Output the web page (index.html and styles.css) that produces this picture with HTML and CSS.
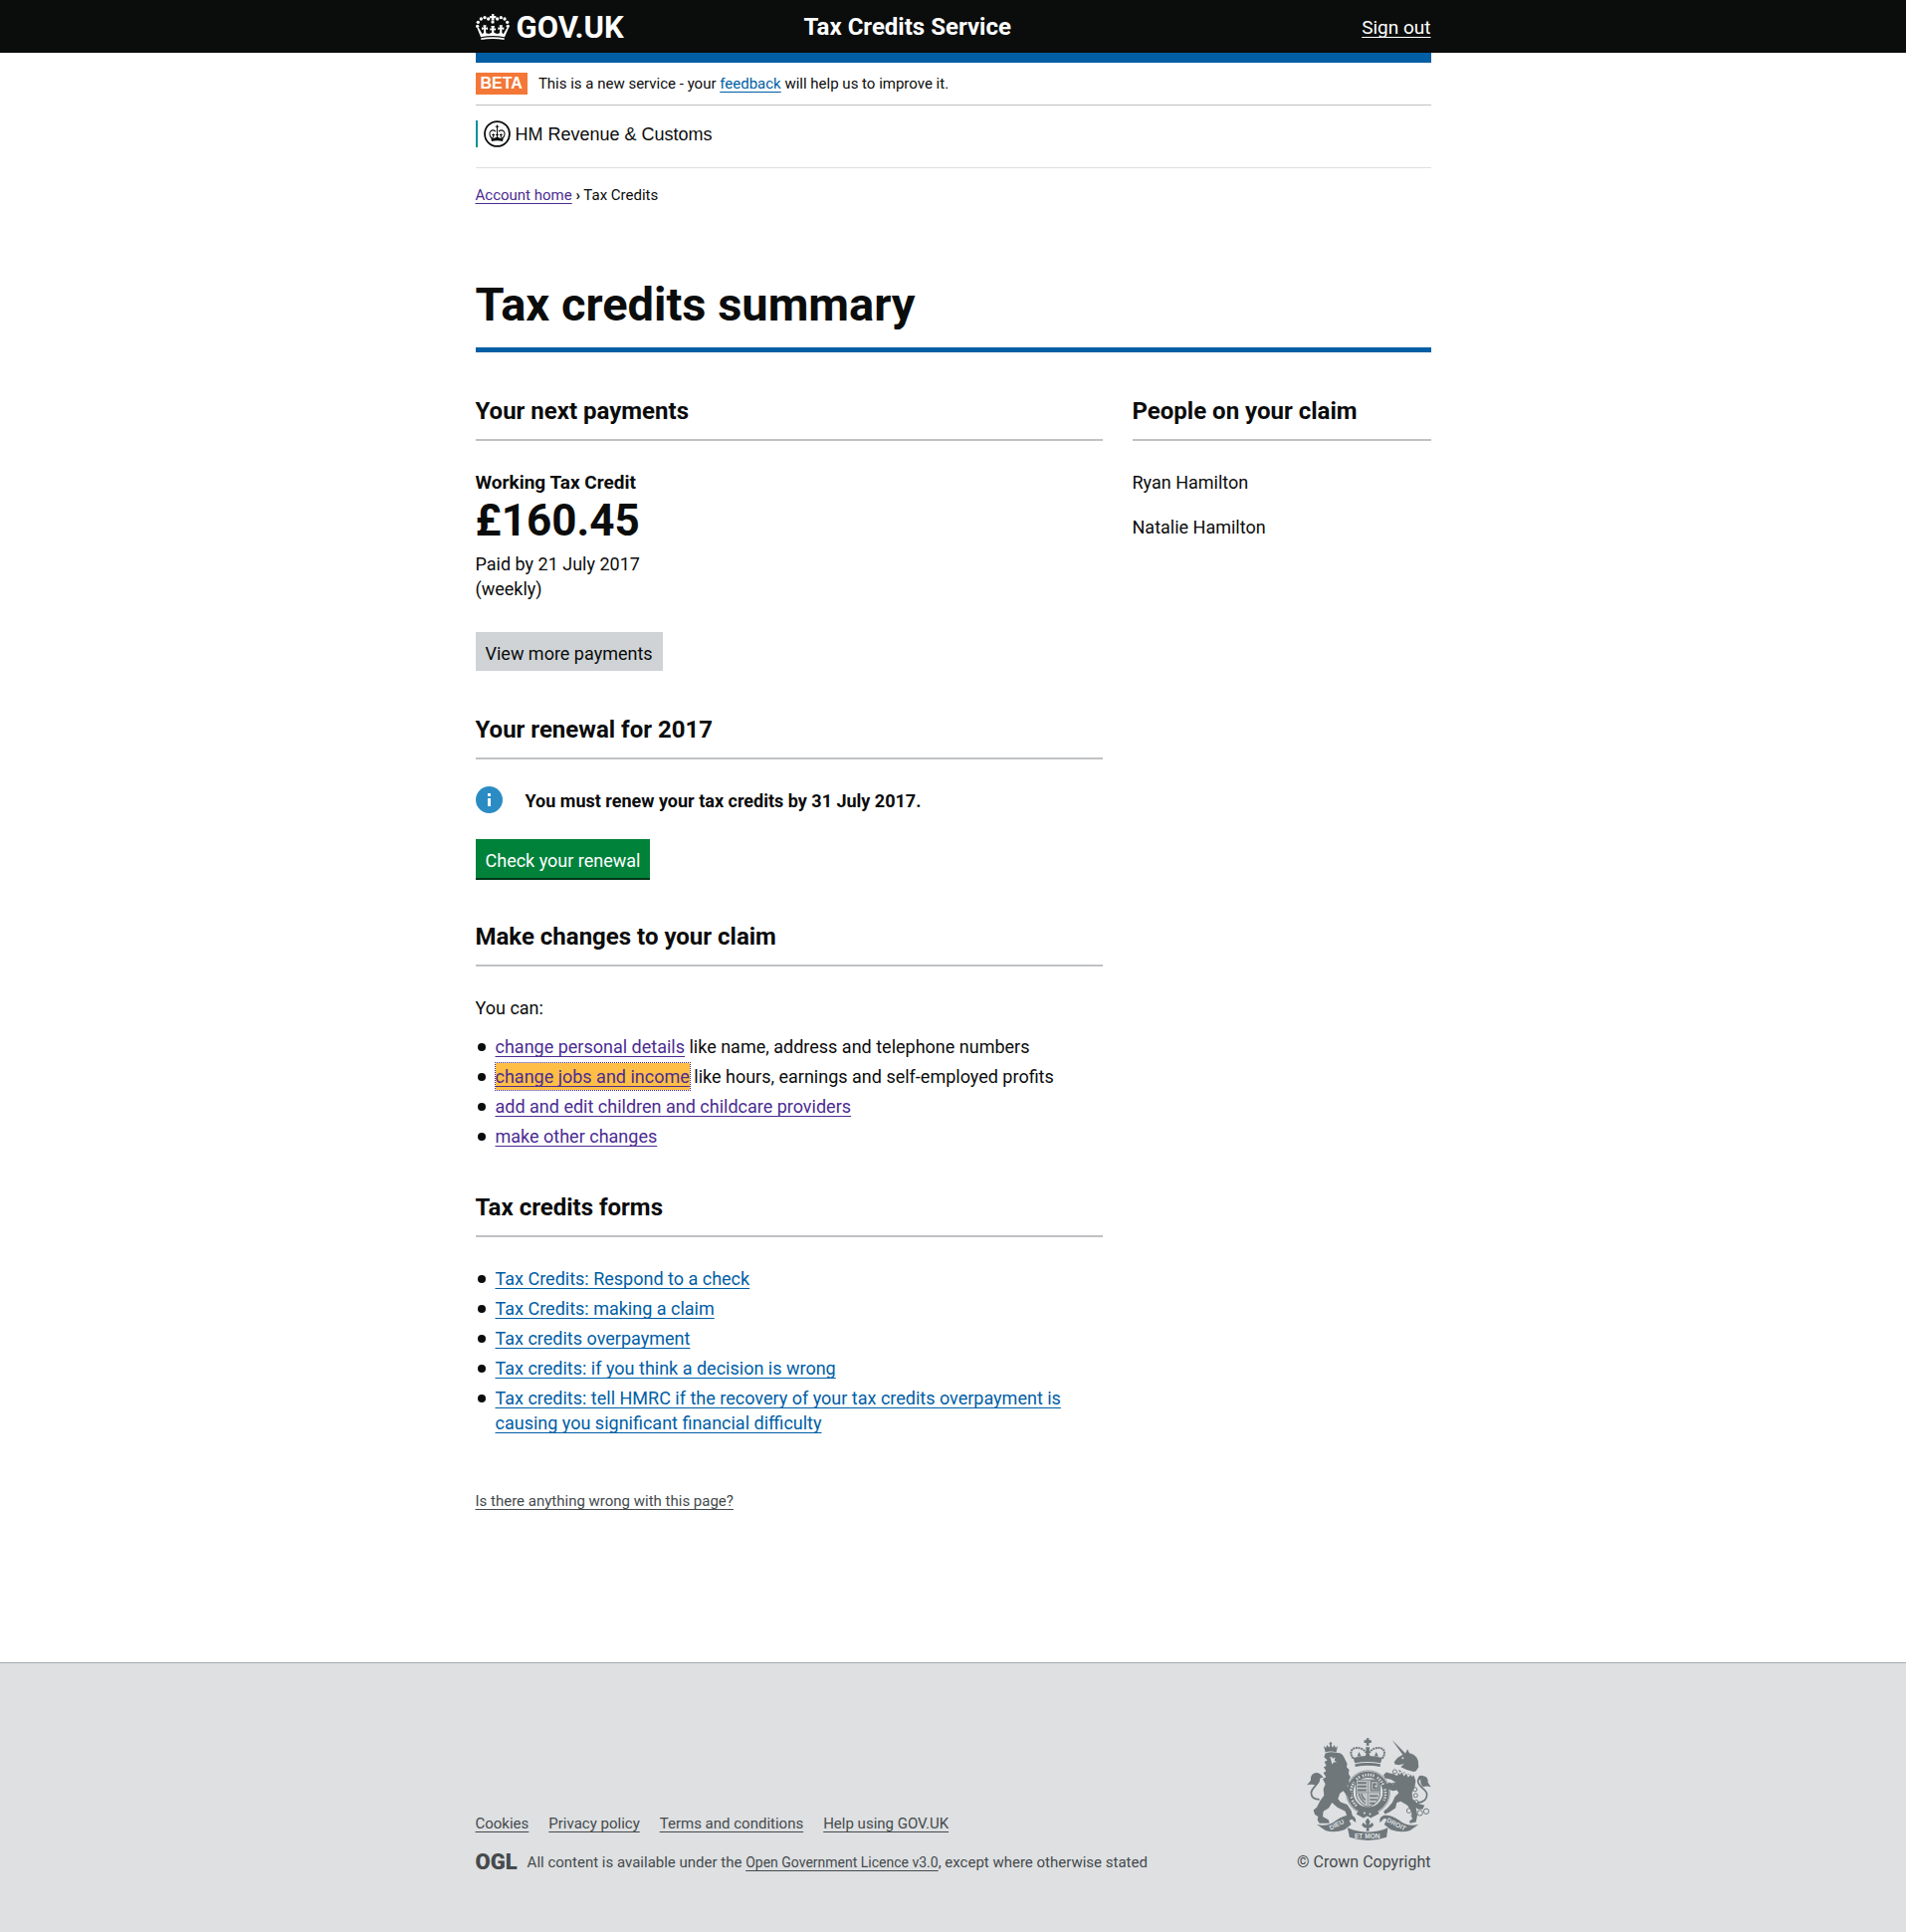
FILE: index.html
```html
<!DOCTYPE html>
<html lang="en">
<head>
<meta charset="utf-8">
<meta name="viewport" content="width=device-width, initial-scale=1">
<title>Tax credits summary - GOV.UK</title>
<link rel="stylesheet" href="styles.css">
</head>
<body>
<header class="site-header">
  <div class="container header-inner">
    <a class="logo" href="#">
      <svg class="logo-crown" viewBox="0 0 102 78" aria-hidden="true" fill="currentColor">
        <path d="M48 0h7v6h6v7h-6l1 6h-9l1-6h-6V6h6z"/>
        <circle cx="51" cy="24" r="5"/>
        <circle cx="38" cy="15" r="5"/><circle cx="27" cy="11" r="5"/><circle cx="16" cy="15" r="5"/><circle cx="7" cy="25" r="5"/><circle cx="5" cy="37" r="5"/>
        <circle cx="65" cy="15" r="5"/><circle cx="76" cy="11" r="5"/><circle cx="87" cy="15" r="5"/><circle cx="95" cy="25" r="5"/><circle cx="97" cy="37" r="5"/>
        <path d="M4 42L9 42 20 61 24 56 24 46 18 48 18 40 24 42 22 34 32 34 30 42 36 40 36 48 30 46 31 58 39 60 48 56 48 48 43 50 43 43 48 44 46 36 57 36 55 44 60 43 60 50 55 48 55 56 64 60 72 58 73 46 67 48 67 40 73 42 71 34 81 34 79 42 85 40 85 48 79 46 79 56 83 61 94 42 99 42 87 70Q51 62 15 70Z"/>
        <path d="M16 73q35-7 70 0v5q-35-6-70 0z"/>
      </svg>
      <span>GOV.UK</span>
    </a>
    <a class="service-name" href="#">Tax Credits Service</a>
    <a class="sign-out" href="#">Sign out</a>
  </div>
</header>
<div class="container">
  <div class="header-bar"></div>
  <div class="phase-banner">
    <strong class="phase-tag">BETA</strong>
    <span>This is a new service - your <a href="#">feedback</a> will help us to improve it.</span>
  </div>
  <div class="organisation">
    <div class="organisation-logo">
      <svg class="organisation-crest" viewBox="0 0 78 78" aria-hidden="true">
        <circle cx="39" cy="39" r="36" fill="none" stroke="currentColor" stroke-width="5"/>
        <g fill="none" stroke="currentColor" stroke-width="3">
          <path d="M21 50C11 32 24 24 35 32M57 50c10-18-3-26-14-18M39 26v26M28 50V38M50 50V38M24 42h8M46 42h8M35 42h8"/>
          <path d="M34 18h10M39 13v14"/>
        </g>
        <path fill="currentColor" d="M20 46l9 6 10-4 10 4 9-6-3 15q-16-5-32 0z"/>
      </svg>
      <span>HM Revenue &amp; Customs</span>
    </div>
  </div>
  <nav class="breadcrumb" aria-label="Breadcrumb"><a class="visited" href="#">Account home</a> <b>›</b> Tax Credits</nav>
  <main>
    <h1>Tax credits summary</h1>
    <div class="columns">
      <div class="column-main">
        <section>
          <h2>Your next payments</h2>
          <h3>Working Tax Credit</h3>
          <p class="amount">£160.45</p>
          <p>Paid by 21 July 2017<br>(weekly)</p>
          <button class="button button-secondary" type="button">View more payments</button>
        </section>
        <section>
          <h2>Your renewal for 2017</h2>
          <div class="notice">
            <svg class="notice-icon" viewBox="0 0 27 27" aria-hidden="true"><circle cx="13.500" cy="13.500" r="13.500" fill="#2b8cc4"/><path fill="#fff" d="M12 7h3v3h-3zM12 12h3v8h-3z"/></svg>
            <strong>You must renew your tax credits by 31 July 2017.</strong>
          </div>
          <button class="button button-primary" type="button">Check your renewal</button>
        </section>
        <section>
          <h2>Make changes to your claim</h2>
          <p>You can:</p>
          <ul class="link-list">
            <li><a class="visited" href="#">change personal details</a> like name, address and telephone numbers</li>
            <li><a class="visited focused" href="#">change jobs and income</a> like hours, earnings and self-employed profits</li>
            <li><a class="visited" href="#">add and edit children and childcare providers</a></li>
            <li><a class="visited" href="#">make other changes</a></li>
          </ul>
        </section>
        <section>
          <h2>Tax credits forms</h2>
          <ul class="link-list">
            <li><a href="#">Tax Credits: Respond to a check</a></li>
            <li><a href="#">Tax Credits: making a claim</a></li>
            <li><a href="#">Tax credits overpayment</a></li>
            <li><a href="#">Tax credits: if you think a decision is wrong</a></li>
            <li><a href="#">Tax credits: tell HMRC if the recovery of your tax credits overpayment is causing you significant financial difficulty</a></li>
          </ul>
        </section>
      </div>
      <aside class="column-side">
        <h2>People on your claim</h2>
        <p>Ryan Hamilton</p>
        <p>Natalie Hamilton</p>
      </aside>
    </div>
    <p class="report"><a href="#">Is there anything wrong with this page?</a></p>
  </main>
</div>
<footer class="site-footer">
  <div class="container footer-inner">
    <div class="footer-meta">
      <nav class="footer-links" aria-label="Footer">
        <a href="#">Cookies</a>
        <a href="#">Privacy policy</a>
        <a href="#">Terms and conditions</a>
        <a href="#">Help using GOV.UK</a>
      </nav>
      <div class="licence">
        <span class="ogl">OGL</span>
        <span>All content is available under the <a href="#">Open Government Licence v3.0</a>, except where otherwise stated</span>
      </div>
    </div>
    <div class="copyright">
      <svg class="arms" viewBox="68 46 376 310" role="img" aria-label="Royal coat of arms" fill="#6f777b">
        <!-- crown -->
        <path d="M248 47h8v6h7v8h-7v8h-8v-8h-7v-8h7z"/>
        <path d="M213 122l-5-16q44-12 88 0l-5 16q-39-8-78 0zM214 125q38-8 76 0v8q-38-7-76 0z"/>
        <g fill="none" stroke="#6f777b" stroke-width="6" stroke-dasharray="6 2"><path d="M208 108C190 84 212 68 236 80q14 8 16 24M296 108c18-24-4-40-28-28q-14 8-16 24"/></g>
        <path d="M246 74h12l-3 26h-6zM226 88l6 14h-12zM278 88l6 14h-12zM252 86l9 18h-18z"/>
        <!-- garter and shield -->
        <circle cx="253" cy="211" r="54" fill="none" stroke="#6f777b" stroke-width="19"/>
        <circle cx="253" cy="211" r="66" fill="none" stroke="#6f777b" stroke-width="2"/>
        <path d="M217 173h72v46q-4 26-36 36-32-10-36-36z" fill="#c3c7c9" stroke="#6f777b" stroke-width="3"/>
        <path d="M221 179h27v6h-27zM221 190h27v6h-27zM221 201h27v6h-27zM258 219h25v5h-25zM258 230h23v5h-23zM258 241h15v5h-15z"/>
        <path d="M262 177h22v28h-22zM225 214q6 20 20 30M233 214q2 14 12 20" fill="none" stroke="#6f777b" stroke-width="4"/>
        <path d="M267 183h12v6h-6v6h8v6h-14z"/>
        <path d="M251 171h4v82h-4zM216 209h74v4h-74z" fill="#9aa0a3"/>
        <g fill="none" stroke="#dee0e2" stroke-width="8"><path d="M204 228a52 52 0 0 1 7-48M218 171a52 52 0 0 1 12-8M236 161a52 52 0 0 1 37 0M281 166a52 52 0 0 1 19 23M304 201a52 52 0 0 1-3 34M206 235a52 52 0 0 0 14 18" stroke-dasharray="4 4"/></g>
        <path d="M229 262l48-1 10 14-26 13-10-6-12 6-22-12z"/>
        <circle cx="242" cy="273" r="3" fill="#dee0e2"/><circle cx="259" cy="276" r="3" fill="#dee0e2"/>
        <!-- lion -->
        <path d="M124 90L119 70 126 76 129 67 135 75 140 64 146 75 151 67 155 76 161 70 157 90Q140 84 124 90Z"/>
        <circle cx="140" cy="63" r="4"/>
        <path d="M124 93Q140 86 158 91Q174 90 180 104L190 124 188 134 196 142 194 154 200 164 194 176 199 188 188 190 196 204 206 212 200 226 190 222 178 206 168 214 162 230 170 240 190 248 202 266 208 290 196 296 178 292 190 284 184 268 160 256 144 242 134 258 118 268 116 284 134 294 136 304 106 304 100 294 102 284 92 278 88 264 98 256 108 236 120 220 118 200 124 186 116 170 126 164 118 152 126 146 119 134 127 130 121 118 130 114 120 104Z"/>
        <path d="M138 104L146 104 144 109 154 105 151 114 158 120 150 119 144 126 142 116Z" fill="#dee0e2"/>
        <path d="M106 232Q82 232 81 212C82 194 104 190 106 168Q104 156 92 160" fill="none" stroke="#6f777b" stroke-width="5"/>
        <path d="M118 166Q106 148 92 152Q78 156 80 174Q76 180 68 188Q84 184 96 190Q108 182 106 168Z"/>
        <!-- unicorn -->
        <path d="M326 53L334 60 365 92 358 97Z"/>
        <path d="M356 98L368 90 372 80 378 92Q398 96 404 114L406 134 398 146 392 148Q368 144 352 134L362 124 346 128 334 126 332 119 342 106Z"/>
        <circle cx="358" cy="107" r="3" fill="#dee0e2"/>
        <path d="M346 142Q366 154 392 160L397 176 394 196 386 212 388 230 402 244 424 250 418 262 404 262 398 256 402 280 398 300 380 304 378 298 388 290 384 268 372 250 352 238 340 242 336 258 318 270 304 276 300 268 312 258 326 242 334 224 346 212 340 204 328 206 314 200 308 188 318 180 328 186 336 180 322 172 304 168 300 158 308 150 330 156 342 160Z"/>
        <path d="M342 142l7 12 7-8 6 12 7-8 6 12 7-8 6 8" fill="none" stroke="#dee0e2" stroke-width="4"/>
        <path d="M402 242Q432 240 431 216C430 200 402 194 404 174Q408 164 418 168" fill="none" stroke="#6f777b" stroke-width="5"/>
        <path d="M404 176Q402 158 418 160Q436 162 434 180Q438 188 443 194Q430 190 420 194Q410 188 412 172Z"/>
        <g fill="none" stroke="#6f777b" stroke-width="3"><circle cx="334" cy="148" r="6"/><circle cx="326" cy="162" r="7"/><circle cx="330" cy="188" r="6"/><circle cx="395" cy="202" r="6"/><circle cx="397" cy="220" r="6"/><circle cx="399" cy="240" r="6"/><circle cx="377" cy="266" r="7"/><circle cx="391" cy="281" r="7"/><circle cx="410" cy="273" r="8"/><circle cx="429" cy="268" r="8"/></g>
        <!-- motto scroll -->
        <path d="M98 308Q132 316 158 294Q180 278 202 280Q218 284 216 302L208 296Q204 286 194 292L202 308 182 324Q150 334 124 326ZM406 308Q372 316 346 294Q324 278 302 280Q286 284 288 302L296 296Q300 286 310 292L302 308 322 324Q354 334 380 326Z"/>
        <path d="M191 318q62 26 122 0l-4 28q-56 20-112 0z"/>
        <path d="M252 288l7 10-3 12 10-8 4 8-8 8h-6v10h-8v-10h-6l-8-8 4-8 10 8-3-12z"/>
        <g class="motto" fill="#dee0e2" font-size="20"><text transform="translate(140 325) rotate(-27)">DIEU</text><text x="212" y="349">ET MON</text><text transform="translate(308 299) rotate(27)">DROIT</text></g>
      </svg>
      <a href="#">© Crown Copyright</a>
    </div>
  </div>
</footer>
</body>
</html>
```
FILE: styles.css
```css
* { box-sizing: border-box; }

body {
  margin: 0;
  background: #fff;
  color: #0b0c0c;
  font: 18px/25px Roboto, "Liberation Sans", sans-serif;
}

h1, h2, h3, p, ul { margin: 0; }

a {
  color: #005ea5;
  text-underline-offset: 3px;
  text-decoration-thickness: 1px;
  text-decoration-skip-ink: none;
}
a.visited { color: #4c2c92; }
a.focused {
  background: #ffbf47;
  outline: 1px dotted #4c2c92;
  padding: 3px 0;
}

.container {
  max-width: 960px;
  margin: 0 auto;
}

/* Header */
.site-header { background: #0b0c0c; }
.header-inner {
  display: grid;
  grid-template-columns: 330px 1fr auto;
  align-items: center;
  height: 53px;
  padding-top: 1px;
}
.header-inner a { color: #fff; }
.logo {
  display: flex;
  align-items: center;
  gap: 7px;
  font-size: 31px;
  font-weight: 700;
  text-decoration: none;
}
.logo-crown { width: 34px; height: 26px; }
.service-name {
  font-size: 24px;
  font-weight: 700;
  text-decoration: none;
}
.sign-out { font-size: 19px; }
.header-bar { height: 10px; background: #005ea5; }

/* Phase banner */
.phase-banner {
  display: flex;
  align-items: baseline;
  gap: 11px;
  padding: 10px 0;
  border-bottom: 1px solid #bfc1c3;
  font-size: 15px;
  line-height: 22px;
}
.phase-tag {
  padding: 0 5px;
  background: #f47738;
  color: #fff;
  font-family: "Liberation Sans", sans-serif;
  font-size: 16px;
}

/* Organisation */
.organisation {
  padding: 15px 0 20px;
  border-bottom: 1px solid #dee0e2;
}
.organisation-logo {
  display: flex;
  align-items: flex-end;
  gap: 5px;
  height: 27px;
  padding-left: 6px;
  border-left: 2px solid #009390;
  font-family: "Liberation Sans", sans-serif;
}
.organisation-crest { width: 27px; height: 27px; }

.breadcrumb {
  margin-top: 17px;
  font-size: 15px;
  line-height: 20px;
}

/* Main content */
h1 {
  margin-top: 75px;
  padding-bottom: 18px;
  border-bottom: 5px solid #005ea5;
  font-size: 47px;
  line-height: 50px;
}
h2 {
  margin: 44px 0 29px;
  padding-bottom: 13px;
  border-bottom: 2px solid #bfc1c3;
  font-size: 24px;
  line-height: 30px;
}
h3 { font-size: 19px; line-height: 25px; }

.columns {
  display: grid;
  grid-template-columns: 630fr 300fr;
  gap: 30px;
}
.column-side p { margin-bottom: 20px; }

.amount {
  margin: 1px 0 6px;
  font-size: 44px;
  font-weight: 700;
  line-height: 50px;
}

.button {
  display: block;
  padding: 9px 10px 5px;
  border: 0;
  font: inherit;
}
.button-secondary {
  margin-top: 31px;
  background: #cfd3d6;
  color: #0b0c0c;
}
.button-primary {
  margin-top: 26px;
  background: #00823b;
  box-shadow: 0 2px 0 #003618;
  color: #fff;
}

.notice {
  display: flex;
  align-items: flex-end;
  gap: 23px;
  margin-top: -2px;
}
.notice-icon { width: 27px; height: 27px; }

.link-list {
  padding: 0;
  list-style: none;
}
p + .link-list { margin-top: 14px; }
.link-list li {
  position: relative;
  margin-bottom: 5px;
  padding-left: 20px;
}
.link-list li::before {
  content: "";
  position: absolute;
  top: 9px;
  left: 2px;
  width: 8px;
  height: 8px;
  border-radius: 50%;
  background: #0b0c0c;
}

.report {
  margin-top: 51px;
  font-size: 15px;
  line-height: 20px;
}
.report a { color: #454a4c; }

/* Footer */
.site-footer {
  margin-top: 152px;
  padding: 75px 0 60px;
  border-top: 1px solid #a1acb2;
  background: #dee0e2;
  color: #454a4c;
  font-size: 15px;
  line-height: 20px;
}
.site-footer a { color: inherit; }
.footer-inner {
  display: flex;
  align-items: flex-end;
  justify-content: space-between;
}
.footer-links {
  display: flex;
  gap: 20px;
  margin-bottom: 19px;
}
.licence {
  display: flex;
  align-items: center;
  gap: 10px;
}
.licence a { font-size: 14px; }
.ogl {
  font-size: 22px;
  font-weight: 900;
}
.copyright {
  display: flex;
  flex-direction: column;
  align-items: flex-end;
  gap: 12px;
}
.copyright a {
  font-size: 16px;
  text-decoration: none;
}
.arms { width: 125px; height: 103px; }
.motto { font-family: "Liberation Sans", sans-serif; font-weight: 700; }
```
